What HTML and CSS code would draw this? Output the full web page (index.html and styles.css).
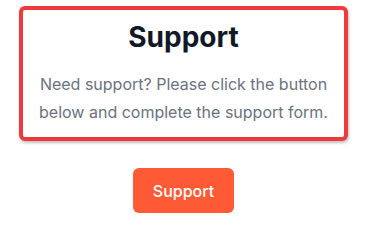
FILE: index.html
```html
<!DOCTYPE html>
<html lang="en">
<head>
<meta charset="utf-8">
<title>Support</title>
<link rel="stylesheet" href="styles.css">
</head>
<body>
<main class="page">
  <section class="card">
    <h1 class="card-title">Support</h1>
    <p class="card-text">Need support? Please click the button below and complete the support form.</p>
  </section>
  <button class="support-btn" type="button">Support</button>
</main>
</body>
</html>
```
FILE: styles.css
```css
* { box-sizing: border-box; }
html, body { margin: 0; padding: 0; background: #ffffff; }
body { font-family: Inter, "Noto Sans", sans-serif; }
.page {
  display: flex;
  flex-direction: column;
  align-items: center;
  padding-top: 6px;
}
.card {
  width: 329px;
  border: 4px solid #ef3a3d;
  border-radius: 6px;
  background: #fff;
  box-shadow: 1px 2px 3px rgba(0,0,0,0.25);
  padding: 9px 16px 11px;
  text-align: center;
}
.card-title {
  margin: 0;
  font-size: 28px;
  line-height: 36px;
  font-weight: 700;
  color: #111827;
}
.card-text {
  margin: 15px 0 0;
  font-size: 16px;
  line-height: 28px;
  color: #6b7280;
}
.support-btn {
  margin-top: 27px;
  width: 101px;
  height: 45px;
  border: none;
  border-radius: 6px;
  background: #ff5a36;
  color: #fff;
  font-family: Inter, "Noto Sans", sans-serif;
  font-size: 16px;
  font-weight: 500;
  padding: 0;
}
```
